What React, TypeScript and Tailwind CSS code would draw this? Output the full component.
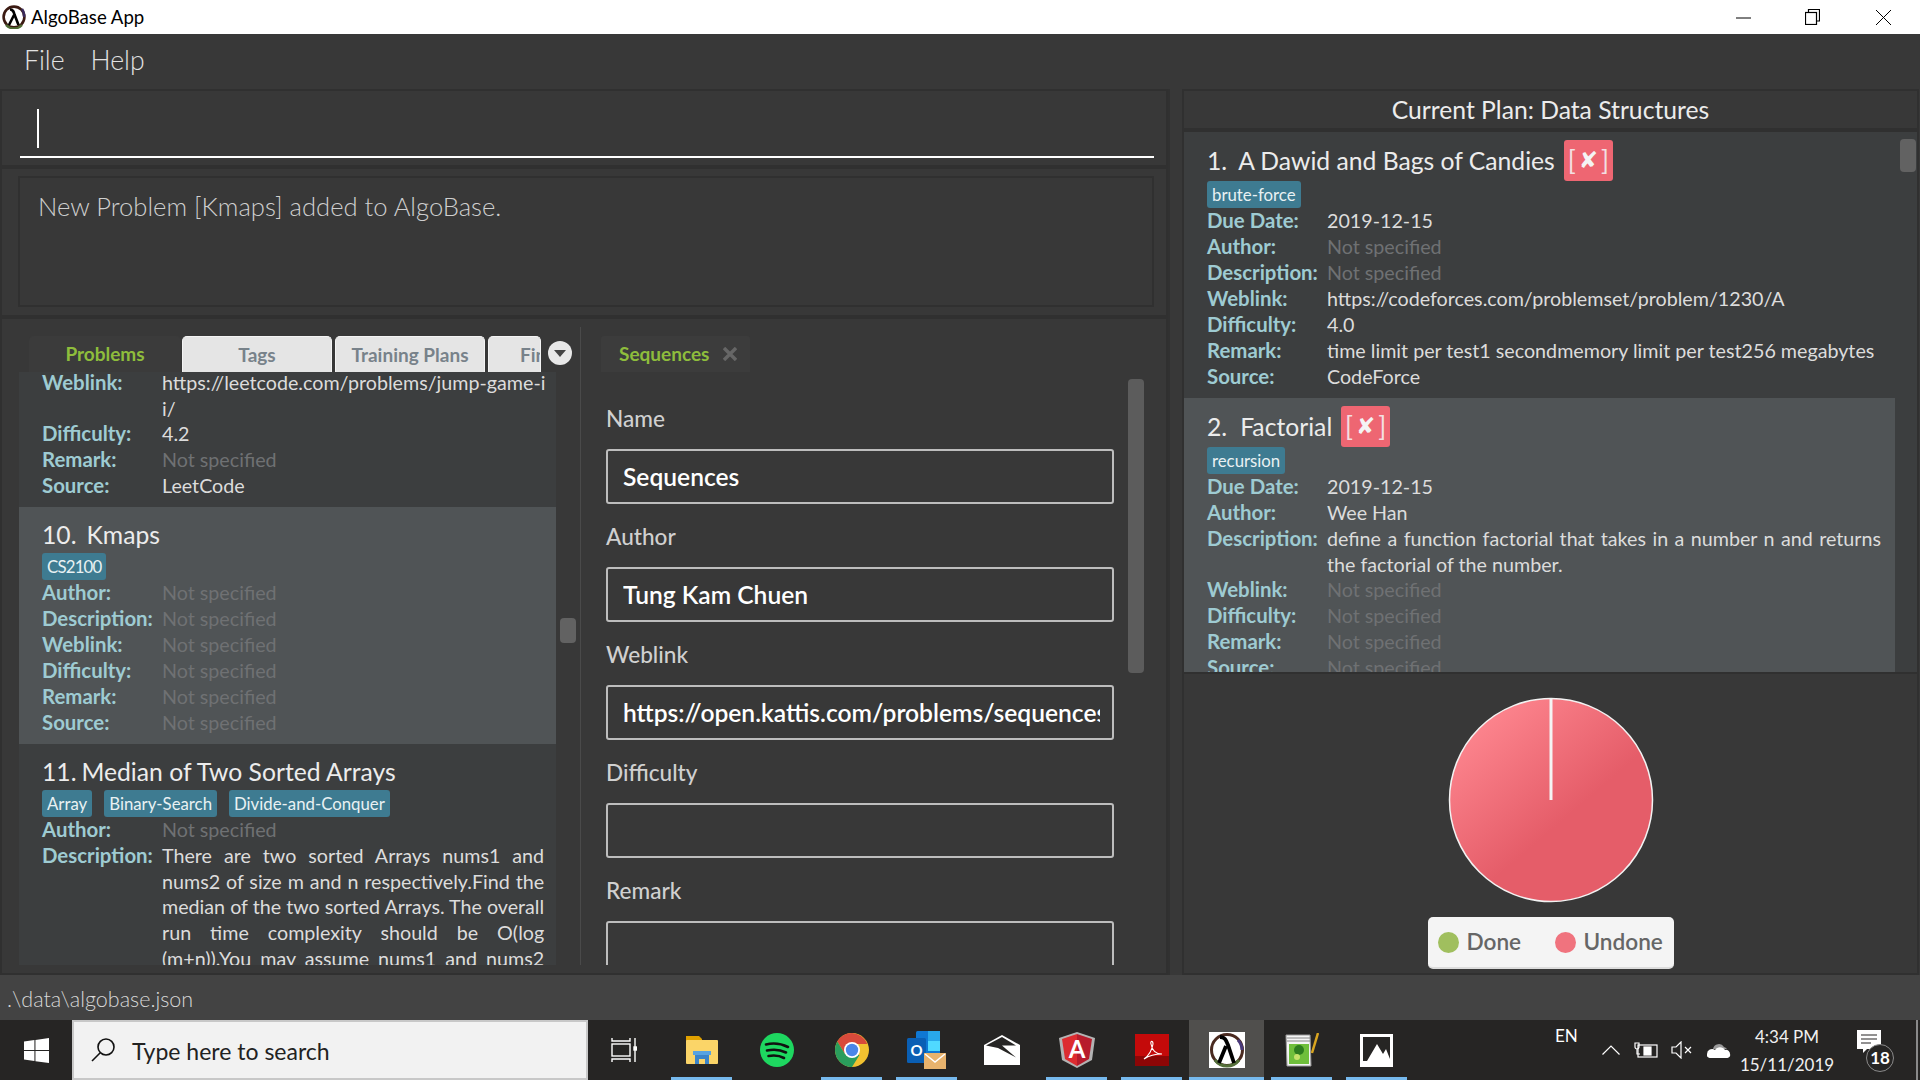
type Field = { label: string; value?: string; lines?: string[]; justify?: number };

function Row({ label, value, lines, justify = 0 }: Field) {
    const rows = lines ?? [value ?? "Not specified"];
    const empty = !lines && !value;
    return (
        <div className="flex text-[19.7px] leading-[25.6px] min-h-[26px]">
            <div className="w-[120px] shrink-0 text-[20.4px] font-bold text-[#9ecbd2]">{label}</div>
            <div className={`flex-1 ${empty ? "text-[#6f7173]" : "text-[#dcdcdc]"}`}>
                {rows.map((line, i) => (
                    <div key={i} className={`whitespace-nowrap ${i < justify ? "[text-align-last:justify]" : ""}`}>{line}</div>
                ))}
            </div>
        </div>
    );
}

function Tag({ text }: { text: string }) {
    const numeric = /\d/.test(text);
    return <span className={`h-[27px] px-[5px] rounded-[3px] bg-[#3e7b91] text-[#e9f1f3] text-[16.8px] leading-[27px] ${numeric ? "tracking-[-0.8px]" : ""}`}>{text}</span>;
}

function RemoveBadge() {
    return (
        <span className="ml-[9px] w-[49px] h-[41px] rounded-[3px] bg-[#ee6672] text-[#f3dfe1] flex items-center justify-center gap-[3px] text-[26px]">
            <span>[</span>
            <span className="font-['DejaVu_Sans'] text-[23px] font-bold text-[#f4f4f4]">✘</span>
            <span>]</span>
        </span>
    );
}

function Item({ index, gap, title, tags, rows, selected, removable, right }: { index: string; gap: string; title: string; tags: string[]; rows: Field[]; selected?: boolean; removable?: boolean; right: string }) {
    return (
        <div className={`pl-[23px] ${right} pt-[8px] pb-[8px] ${selected ? "bg-[#505456]" : ""}`}>
            <div className={`flex items-center text-[24.7px] text-[#ececec] whitespace-nowrap ${removable ? "h-[41px]" : "h-[38px]"}`}>
                <span className={gap}>{index}</span>
                <span>{title}</span>
                {removable && <RemoveBadge />}
            </div>
            <div className="flex gap-[12px] h-[27px]">
                {tags.map((t) => <Tag key={t} text={t} />)}
            </div>
            {rows.map((r) => <Row key={r.label} {...r} />)}
        </div>
    );
}

function AppLogo({ size }: { size: number }) {
    return (
        <svg width={size} height={size} viewBox="0 0 24 24" fill="none">
            <circle cx="12" cy="12" r="10.4" stroke="#3b1a12" strokeWidth="2.6" />
            <path d="M4 20a11 11 0 0 0 16 0" stroke="#4f6b35" strokeWidth="2.4" />
            <path d="M20 4a11 11 0 0 1 2 8" stroke="#3a2a5c" strokeWidth="2.4" />
            <path d="M8 4.5c3 0 3.6 2 4.5 5L16.5 20M12 10l-5 10" stroke="#000" strokeWidth="2.6" />
        </svg>
    );
}

function FormField({ label, value }: { label: string; value: string }) {
    return (
        <div className="mt-[18px] first:mt-0">
            <div className="h-[30px] leading-[30px] text-[22.6px] font-medium text-[#d0d0d0]">{label}</div>
            <div className="mt-[15px] w-[508px] h-[55px] border-2 border-[#bdbdbd] rounded-[3px] pl-[15px] pr-[12px]">
                <div className="overflow-hidden whitespace-nowrap leading-[51px] text-[24.6px] font-semibold text-white">{value}</div>
            </div>
        </div>
    );
}

function TabButton({ children, className }: { children: string; className: string }) {
    return (
        <div className={`${className} h-[36px] rounded-t-[5px] bg-[#e5e5e5] border-x border-t border-[#f4f4f4] overflow-hidden whitespace-nowrap leading-[36px] text-[19px] font-bold text-[#78828a]`}>
            {children}
        </div>
    );
}

function FolderIcon() {
    return (
        <svg width="34" height="28" viewBox="0 0 34 28">
            <path d="M1 0h13l3 3v4H1z" fill="#e0a100" />
            <rect x="1" y="4" width="32" height="24" rx="1" fill="#fbd568" />
            <path d="M10 28V18h14v10h-4v-5h-6v5z" fill="#3b84c8" />
            <rect x="8" y="15" width="18" height="4" fill="#58a3e0" />
        </svg>
    );
}

function SpotifyIcon() {
    return (
        <svg width="34" height="34" viewBox="0 0 34 34">
            <circle cx="17" cy="17" r="17" fill="#1ed760" />
            <path d="M6 11.5c8-2 15-1 22 2.5M7 17.5c7-1.5 13-1 19 2M8.5 23c6-1 11-.5 15.5 2" stroke="#111" strokeWidth="2.6" fill="none" strokeLinecap="round" />
        </svg>
    );
}

function ChromeIcon() {
    return (
        <svg width="34" height="34" viewBox="0 0 34 34">
            <circle cx="17" cy="17" r="17" fill="#f2c230" />
            <path d="M17 0A17 17 0 0 0 2.3 8.5L10 21l7-10h15.3A17 17 0 0 0 17 0z" fill="#d84a3b" />
            <path d="M2.3 8.5A17 17 0 0 0 17 34l7.5-12-14.5-1z" fill="#2a9d5c" />
            <circle cx="17" cy="17" r="8" fill="#fff" />
            <circle cx="17" cy="17" r="6.2" fill="#4a86e8" />
        </svg>
    );
}

function OutlookIcon() {
    return (
        <svg width="40" height="38" viewBox="0 0 40 38">
            <rect x="9" y="0" width="24" height="30" rx="1.5" fill="#0f78d4" />
            <rect x="21" y="0" width="12" height="10" fill="#29a8ea" />
            <rect x="21" y="10" width="12" height="10" fill="#50d9ff" />
            <rect x="0" y="7" width="19" height="25" rx="1.5" fill="#0a5fb4" />
            <text x="9.5" y="25" textAnchor="middle" fontSize="15" fontWeight="700" fill="#fff" fontFamily="Lato">O</text>
            <rect x="17" y="22" width="22" height="16" fill="#e8b36d" />
            <path d="M18 23l10 8 10-8" stroke="#fff" strokeWidth="1.5" fill="none" />
        </svg>
    );
}

function MailIcon() {
    return (
        <svg width="36" height="30" viewBox="0 0 36 30">
            <path d="M0 10L18 0l18 10v20H0z" fill="#fff" />
            <path d="M2 10.5L18 2l14 8.5H18l14 12L14 13z" fill="#262524" />
        </svg>
    );
}

function AngularIcon() {
    return (
        <svg width="36" height="36" viewBox="0 0 36 36">
            <path d="M18 0l18 6-3 22-15 8-15-8L0 6z" fill="#b3b3b3" />
            <path d="M18 2l15 5-3 20-12 7z" fill="#b71c2c" />
            <path d="M18 2L3 7l3 20 12 7z" fill="#dd2c30" />
            <text x="18" y="26" textAnchor="middle" fontSize="24" fontWeight="700" fill="#fff" fontFamily="Lato">A</text>
        </svg>
    );
}

function AcrobatIcon() {
    return (
        <svg width="34" height="32" viewBox="0 0 34 32">
            <rect width="34" height="32" fill="#c40a0a" />
            <rect y="22" width="34" height="10" fill="#8c0606" />
            <path d="M9 25c4-3 8-9 9-15 0-4-3-3-2 0 1 6 5 10 11 10-4 0-12 1-18 5z" fill="none" stroke="#fff" strokeWidth="1.1" />
        </svg>
    );
}

function LambdaTile() {
    return (
        <svg width="36" height="36" viewBox="0 0 36 36">
            <rect width="36" height="36" fill="#fff" />
            <circle cx="18" cy="18" r="15.5" fill="none" stroke="#4a2a20" strokeWidth="3" />
            <path d="M6 28a15 15 0 0 0 24 0" stroke="#55703a" strokeWidth="3" fill="none" />
            <path d="M29 8a15 15 0 0 1 4 10" stroke="#4a3a7c" strokeWidth="3" fill="none" />
            <path d="M11 5c5 0 6 3 8 8l6 18M17 14L10 31" stroke="#000" strokeWidth="3.8" fill="none" />
        </svg>
    );
}

function NotepadIcon() {
    return (
        <svg width="34" height="34" viewBox="0 0 34 34">
            <path d="M1 2h24l1 31H2z" fill="#f5f5f5" stroke="#999" />
            <rect x="4" y="11" width="20" height="20" fill="#6fbf3b" />
            <circle cx="14" cy="17" r="5" fill="#2e7d1f" />
            <circle cx="12" cy="24" r="3" fill="#c6e26a" />
            <path d="M2 5h23M2 8h23" stroke="#888" />
            <path d="M33 0l-6 20" stroke="#d9a520" strokeWidth="2.5" />
        </svg>
    );
}

function PhotosIcon() {
    return (
        <svg width="33" height="33" viewBox="0 0 33 33">
            <rect width="33" height="33" fill="#fff" />
            <path d="M3 3h27v22l-4-10-3 5-6-10-10 17H3z" fill="#262524" />
        </svg>
    );
}

const taskbarApps = [
    { icon: <FolderIcon />, line: "w-[61px]" },
    { icon: <SpotifyIcon />, line: "" },
    { icon: <ChromeIcon />, line: "w-[61px]" },
    { icon: <OutlookIcon />, line: "w-[61px]" },
    { icon: <MailIcon />, line: "" },
    { icon: <AngularIcon />, line: "w-[61px]" },
    { icon: <AcrobatIcon />, line: "w-[61px]" },
    { icon: <LambdaTile />, line: "w-[75px]", active: true },
    { icon: <NotepadIcon />, line: "w-[61px]" },
    { icon: <PhotosIcon />, line: "w-[61px]" },
];

function Taskbar() {
    return (
        <div className="h-[60px] bg-[#262524] flex items-center shrink-0 text-white">
            <div className="w-[72px] flex justify-center">
                <svg width="25" height="25" viewBox="0 0 24 24" fill="#fff">
                    <path d="M0 3.4L10 2v9.4H0zM11 1.8L24 0v11.4H11zM0 12.5h10V22L0 20.6zM11 12.5h13V24l-13-1.8z" />
                </svg>
            </div>
            <div className="w-[516px] h-[60px] bg-[#f2f2f2] border-2 border-[#c8c8c8] flex items-center pl-[16px]">
                <svg width="26" height="26" viewBox="0 0 26 26" fill="none" stroke="#111" strokeWidth="1.6">
                    <circle cx="16" cy="10" r="8" />
                    <path d="M10 16L2 24" />
                </svg>
                <span className="ml-[16px] pt-[2px] text-[23px] text-[#222]">Type here to search</span>
            </div>
            <div className="w-[76px] flex justify-center pr-[4px]">
                <svg width="26" height="26" viewBox="0 0 26 26" fill="none" stroke="#fff" strokeWidth="1.4">
                    <path d="M1 1v3h18V1M1 25v-3h18v3" />
                    <rect x="1" y="7" width="18" height="12" />
                    <path d="M24 1v24" />
                    <rect x="23" y="10" width="2.5" height="3" fill="#fff" />
                </svg>
            </div>
            {taskbarApps.map((app, i) => (
                <div key={i} className={`relative w-[75px] h-[60px] flex items-center justify-center ${app.active ? "bg-[#504f4d]" : ""}`}>
                    {app.icon}
                    {app.line && <span className={`absolute bottom-0 h-[3px] bg-[#76b9ed] ${app.line}`} />}
                </div>
            ))}
            <span className="ml-[141px] self-start mt-[3px] w-[24px] text-[17px]">EN</span>
            <svg className="ml-[23px]" width="18" height="10" viewBox="0 0 18 10" fill="none" stroke="#fff" strokeWidth="1.2">
                <path d="M0.5 9.5L9 1l8.5 8.5" />
            </svg>
            <svg className="ml-[14px]" width="24" height="16" viewBox="0 0 24 16" fill="none" stroke="#fff" strokeWidth="1.2">
                <rect x="4" y="3" width="19" height="12" />
                <rect x="10" y="5" width="7" height="8" fill="#fff" />
                <path d="M1 1v4a2 2 0 0 0 4 0V1zM3 7v5h3" />
            </svg>
            <svg className="ml-[13px]" width="22" height="18" viewBox="0 0 22 18" fill="none" stroke="#fff" strokeWidth="1.2">
                <path d="M1 6h4l5-5v16l-5-5H1zM14 6l6 6M20 6l-6 6" />
            </svg>
            <svg className="ml-[14px]" width="24" height="16" viewBox="0 0 24 16">
                <path d="M6 7a6 6 0 0 1 11-2 5 5 0 0 1 3 2z" fill="#9a9a9a" />
                <path d="M0 12a5 5 0 0 1 8-4 6 6 0 0 1 10 0 4 4 0 0 1 5 4 3 3 0 0 1-3 4H3a3 3 0 0 1-3-4z" fill="#fff" />
            </svg>
            <div className="ml-[6px] mt-[2px] w-[100px] text-center text-[17px] leading-[28px] text-[#f0f0f0]">
                <div>4:34 PM</div>
                <div>15/11/2019</div>
            </div>
            <div className="relative ml-[20px] w-[38px] h-[40px]">
                <svg width="24" height="24" viewBox="0 0 24 24">
                    <path d="M0 0h24v19H10l-4 4v-4H0z" fill="#fff" />
                    <path d="M4 5h16M4 9h16M4 13h10" stroke="#262524" strokeWidth="1.2" />
                </svg>
                <span className="absolute left-[9px] top-[14px] w-[28px] h-[28px] rounded-full bg-[#262524] border border-[#8a8a8a] text-center text-[17px] font-bold leading-[26px]">18</span>
            </div>
            <span className="ml-[21px] w-[2px] h-[60px] bg-[#8a8a8a]" />
        </div>
    );
}

export default function App() {
    return (
        <div className="w-[1920px] h-[1080px] overflow-hidden flex flex-col bg-[#383838] font-['Lato',sans-serif]">
            {/* Title bar */}
            <div className="h-[34px] bg-white flex items-center shrink-0 pl-[2px] text-[18.6px] text-black">
                <AppLogo size={24} />
                <span className="ml-[5px] pt-[2px]">AlgoBase App</span>
                <div className="ml-auto flex items-center pr-[29px]">
                    <svg width="15" height="15" viewBox="0 0 15 15" stroke="#000" strokeWidth="1" fill="none"><path d="M0 8h15" /></svg>
                    <svg className="ml-[54px]" width="15" height="16" viewBox="0 0 15 16" stroke="#000" strokeWidth="1.2" fill="none"><rect x="0.5" y="3.5" width="11" height="12" /><path d="M3.5 3V0.5h11V12H12" /></svg>
                    <svg className="ml-[56px]" width="15" height="15" viewBox="0 0 15 15" stroke="#000" strokeWidth="1" fill="none"><path d="M0 0l15 15M15 0L0 15" /></svg>
                </div>
            </div>

            {/* Menu */}
            <div className="h-[55px] shrink-0 flex items-center pl-[24px] pb-[2px] gap-[26px] text-[26.6px] font-light text-[#e2e2e2]">
                <span>File</span>
                <span>Help</span>
            </div>

            <div className="flex flex-1 min-h-0">
                {/* Left column */}
                <div className="w-[1170px] flex flex-col border-r-2 border-[#313131]">
                    <div className="h-[78px] shrink-0 border-2 border-[#303030] pl-[18px] pr-[12px]">
                        <div className="h-[67px] border-b-2 border-white pt-[18px] pl-[17px]">
                            <div className="w-[2px] h-[39px] bg-white" />
                        </div>
                    </div>
                    <div className="h-[150px] shrink-0 border-2 border-[#303030] pt-[7px] pl-[16px] pr-[12px]">
                        <div className="h-[131px] border-2 border-[#303030] pl-[18px] pt-[11px] text-[25.6px] leading-[34px] font-light text-[#cfcfcf]">
                            New Problem [Kmaps] added to AlgoBase.
                        </div>
                    </div>
                    <div className="flex-1 min-h-0 flex border-2 border-[#303030]">
                        {/* Problem list */}
                        <div className="w-[578px] shrink-0 flex flex-col pt-[17px] pb-[8px] pl-[17px]">
                            <div className="flex h-[36px] shrink-0 items-start pl-[10px]">
                                <div className="w-[152px] h-[36px] rounded-t-[5px] bg-[#3b3b3b] text-center leading-[36px] text-[19px] font-bold text-[#8ebd3c]">Problems</div>
                                <div className="ml-[1px] flex gap-[3px]">
                                    <TabButton className="w-[150px] text-center">Tags</TabButton>
                                    <TabButton className="w-[150px] text-center">Training Plans</TabButton>
                                    <TabButton className="w-[53px] pl-[31px]">Find</TabButton>
                                </div>
                                <div className="ml-[7px] mt-[5px] w-[24px] h-[24px] rounded-full bg-[#e8e8e8] flex items-center justify-center">
                                    <div className="border-x-[6px] border-t-[7px] border-x-transparent border-t-[#444]" />
                                </div>
                            </div>
                            <div className="flex flex-1 min-h-0">
                                <div className="w-[537px] bg-[#3c3e3f] overflow-hidden">
                                    <div className="-mt-[2px]">
                                        <div className="pl-[23px] pr-[14px] pb-[8px]">
                                            <Row label="Weblink:" lines={["https://leetcode.com/problems/jump-game-i", "i/"]} />
                                            <Row label="Difficulty:" value="4.2" />
                                            <Row label="Remark:" />
                                            <Row label="Source:" value="LeetCode" />
                                        </div>
                                        <Item index="10." gap="mr-[10px]" right="pr-[20px]" title="Kmaps" tags={["CS2100"]} selected rows={[
                                            { label: "Author:" },
                                            { label: "Description:" },
                                            { label: "Weblink:" },
                                            { label: "Difficulty:" },
                                            { label: "Remark:" },
                                            { label: "Source:" },
                                        ]} />
                                        <Item index="11." gap="mr-[5px]" right="pr-[20px]" title="Median of Two Sorted Arrays" tags={["Array", "Binary-Search", "Divide-and-Conquer"]} rows={[
                                            { label: "Author:" },
                                            {
                                                label: "Description:",
                                                justify: 5,
                                                lines: [
                                                    "There are two sorted Arrays nums1 and",
                                                    "nums2 of size m and n respectively.Find the",
                                                    "median of the two sorted Arrays. The overall",
                                                    "run time complexity should be O(log",
                                                    "(m+n)).You may assume nums1 and nums2",
                                                ],
                                            },
                                        ]} />
                                    </div>
                                </div>
                                <div className="w-[22px] pl-[4px] pt-[246px]">
                                    <div className="w-[16px] h-[25px] rounded-[4px] bg-[#626262]" />
                                </div>
                            </div>
                        </div>
                        <div className="w-px mt-[8px] mb-[8px] bg-[#4a4a4a]" />
                        {/* Editor tabs */}
                        <div className="flex-1 min-w-0 flex flex-col pt-[17px] pb-[8px] pl-[20px]">
                            <div className="w-[149px] h-[36px] shrink-0 rounded-t-[3px] bg-[#3c3c3c] flex items-center pl-[18px] text-[19px] font-bold text-[#8ebd3c]">
                                Sequences
                                <svg className="ml-[14px]" width="14" height="14" viewBox="0 0 14 14" stroke="#666" strokeWidth="3.4"><path d="M1 1l12 12M13 1L1 13" /></svg>
                            </div>
                            <div className="flex flex-1 min-h-0">
                                <div className="w-[527px] overflow-hidden pl-[5px] pt-[32px]">
                                    <FormField label="Name" value="Sequences" />
                                    <FormField label="Author" value="Tung Kam Chuen" />
                                    <FormField label="Weblink" value="https://open.kattis.com/problems/sequences" />
                                    <FormField label="Difficulty" value="" />
                                    <FormField label="Remark" value="" />
                                </div>
                                <div className="pt-[7px]">
                                    <div className="w-[16px] h-[294px] rounded-[4px] bg-[#5c5c5c]" />
                                </div>
                            </div>
                        </div>
                    </div>
                </div>

                {/* Right column */}
                <div className="flex-1 min-w-0 flex flex-col ml-[12px] mr-[1px]">
                    <div className="h-[41px] shrink-0 border-2 border-[#303030] flex items-center justify-center text-[24.7px] text-[#ececec]">
                        Current Plan: Data Structures
                    </div>
                    <div className="h-[544px] shrink-0 border-2 border-[#303030] flex bg-[#3c3e3f]">
                        <div className="w-[711px] overflow-hidden">
                            <Item index="1." gap="mr-[11px]" right="pr-[14px]" title="A Dawid and Bags of Candies" tags={["brute-force"]} removable rows={[
                                { label: "Due Date:", value: "2019-12-15" },
                                { label: "Author:" },
                                { label: "Description:" },
                                { label: "Weblink:", value: "https://codeforces.com/problemset/problem/1230/A" },
                                { label: "Difficulty:", value: "4.0" },
                                { label: "Remark:", value: "time limit per test1 secondmemory limit per test256 megabytes" },
                                { label: "Source:", value: "CodeForce" },
                            ]} />
                            <Item index="2." gap="mr-[13px]" right="pr-[14px]" title="Factorial" tags={["recursion"]} removable selected rows={[
                                { label: "Due Date:", value: "2019-12-15" },
                                { label: "Author:", value: "Wee Han" },
                                { label: "Description:", justify: 1, lines: ["define a function factorial that takes in a number n and returns", "the factorial of the number."] },
                                { label: "Weblink:" },
                                { label: "Difficulty:" },
                                { label: "Remark:" },
                                { label: "Source:" },
                            ]} />
                        </div>
                        <div className="pl-[5px] pt-[7px]">
                            <div className="w-[16px] h-[33px] rounded-[4px] bg-[#626262]" />
                        </div>
                    </div>
                    <div className="flex-1 min-h-0 flex flex-col items-center pt-[23px] border-x-2 border-b-2 border-[#303030]">
                        <svg width="206" height="206" viewBox="0 0 206 206">
                            <defs>
                                <linearGradient id="undone" x1="0.15" y1="0.1" x2="0.75" y2="0.8">
                                    <stop offset="0" stopColor="#fd858e" />
                                    <stop offset="0.7" stopColor="#e55d69" />
                                    <stop offset="1" stopColor="#e55d69" />
                                </linearGradient>
                            </defs>
                            <circle cx="103" cy="103" r="101.5" fill="url(#undone)" stroke="#f2f2f2" strokeWidth="1.5" />
                            <path d="M103 2v101" stroke="#f4f4f4" strokeWidth="3" />
                        </svg>
                        <div className="mt-[14px] w-[246px] h-[52px] rounded-[5px] bg-[#f4f4f4] border-b-2 border-[#dcdcdc] flex items-center pl-[10px] text-[22.6px] font-semibold text-[#666]">
                            <span className="w-[21px] h-[21px] rounded-full bg-[#a0bf5e]" />
                            <span className="ml-[8px] w-[78px]">Done</span>
                            <span className="ml-[10px] w-[21px] h-[21px] rounded-full bg-[#f0737e]" />
                            <span className="ml-[8px]">Undone</span>
                        </div>
                    </div>
                </div>
            </div>

            {/* Status bar */}
            <div className="h-[45px] shrink-0 bg-[#434343] flex items-center pl-[7px] pt-[3px] text-[21.5px] font-light text-[#d8d8d8]">
                .\data\algobase.json
            </div>

            <Taskbar />
        </div>
    );
}
